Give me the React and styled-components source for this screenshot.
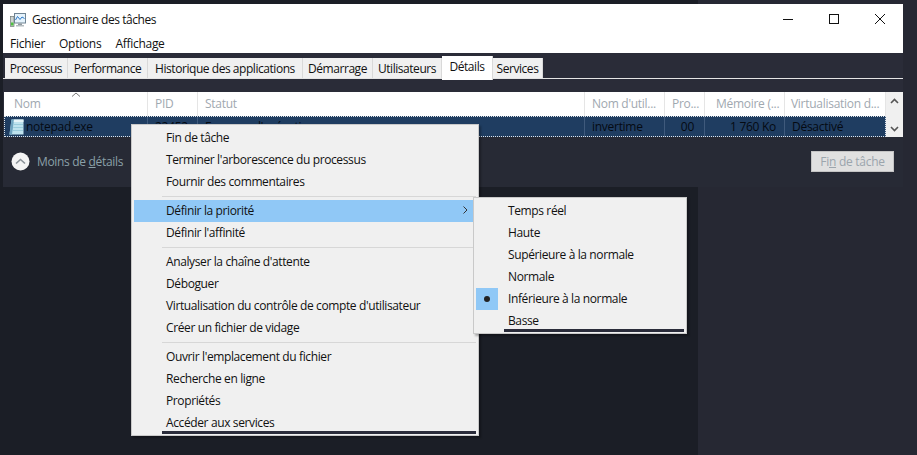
import React from "react";
import styled, { createGlobalStyle } from "styled-components";

const GlobalStyle = createGlobalStyle`
  html, body {
    margin: 0;
    padding: 0;
    height: 100%;
    background: #1b1e26;
    overflow: hidden;
  }
  * {
    box-sizing: border-box;
  }
  body {
    font-family: "Open Sans", "Liberation Sans", sans-serif;
    font-size: 12px;
    letter-spacing: -0.28px;
    color: #111;
  }
`;

const Desktop = styled.div`
  position: relative;
  width: 917px;
  height: 455px;
  display: grid;
  grid-template-columns: 698px 219px;
  overflow: hidden;
`;

const BackLeft = styled.div`
  background: #1b1e26;
`;

const BackRight = styled.div`
  background: #262833;
`;

const Window = styled.div`
  position: absolute;
  left: 3px;
  top: 4px;
  width: 900px;
  height: 183px;
  background: #2a2c38;
  display: flex;
  flex-direction: column;
`;

const TitleBar = styled.div`
  height: 32px;
  background: #fff;
  display: flex;
  align-items: center;
  padding-left: 7px;
  gap: 6px;
`;

const WindowTitle = styled.span`
  flex: 1;
  line-height: 30px;
  letter-spacing: -0.45px;
`;

const Controls = styled.div`
  display: flex;
  height: 32px;
`;

const ControlButton = styled.div`
  width: 46px;
  display: flex;
  align-items: center;
  justify-content: center;
  padding-bottom: 3px;
`;

const MenuBar = styled.div`
  height: 17px;
  background: #fff;
  display: flex;
  gap: 14px;
  padding-left: 7px;
  line-height: 16px;
`;

const TabStrip = styled.div`
  height: 26px;
  display: flex;
  align-items: flex-end;
  padding-left: 2px;
  border-bottom: 1px solid #e4e4e4;
`;

const Tab = styled.div`
  position: relative;
  width: ${(p) => p.$w}px;
  height: ${(p) => (p.$active ? 24 : 20)}px;
  margin-bottom: ${(p) => (p.$active ? -2 : 0)}px;
  padding-top: 3px;
  background: ${(p) => (p.$active ? "#fff" : "#f0f0f0")};
  border-right: 1px solid #d9d9d9;
  text-align: center;
  line-height: 15px;
  letter-spacing: -0.45px;
  z-index: ${(p) => (p.$active ? 1 : 0)};
`;

const TableArea = styled.div`
  margin: 13px 0 0 1px;
  display: flex;
  height: 45px;
`;

const Table = styled.div`
  width: 882px;
  background: #fff;
`;

const Row = styled.div`
  display: grid;
  grid-template-columns: 144px 50px 387px 80px 40px 80px 101px;
  height: ${(p) => p.$h}px;
`;

const HeaderCell = styled.div`
  position: relative;
  padding: 3px 0 0 ${(p) => p.$pad || 10}px;
  color: #9fa8b0;
  border-right: 1px solid #e5e5e5;
  line-height: 18px;
  white-space: nowrap;
`;

const SortCaret = styled.svg`
  position: absolute;
  left: 67px;
  top: 0;
`;

const SelectedRow = styled(Row)`
  background: #1f3d61;
  outline: 1px dotted #dfe5ea;
  outline-offset: -1px;
`;

const Cell = styled.div`
  padding: 0 ${(p) => p.$end || 0}px 0 ${(p) => p.$pad || 0}px;
  color: #050a12;
  border-right: 1px solid #3f5a7c;
  line-height: 20px;
  white-space: nowrap;
  display: flex;
  align-items: center;
  justify-content: ${(p) => (p.$end ? "flex-end" : "flex-start")};
  gap: 2px;
`;

const ScrollBar = styled.div`
  width: 17px;
  background: #f0f0f0;
  display: flex;
  flex-direction: column;
  justify-content: space-between;
  align-items: center;
  padding: 6px 0 5px;
`;

const Footer = styled.div`
  flex: 1;
  background: #272a35;
  display: flex;
  align-items: center;
  justify-content: space-between;
  padding: 0 9px 2px 8px;
`;

const DetailsToggle = styled.div`
  display: flex;
  align-items: center;
  gap: 7px;
  color: #8ba0a8;
  letter-spacing: -0.32px;
`;

const EndTaskButton = styled.div`
  width: 83px;
  height: 21px;
  background: #e0e0e0;
  border: 1px solid #c4c4c4;
  color: #9ba5ad;
  text-align: center;
  line-height: 19px;
`;

const Menu = styled.div`
  position: absolute;
  left: ${(p) => p.$x}px;
  top: ${(p) => p.$y}px;
  width: ${(p) => p.$w}px;
  background: #f0f0f0;
  border: 1px solid #c9c9c9;
  padding: 2px 2px 1px;
  box-shadow: 2px 2px 2px rgba(0, 0, 0, 0.3);
  z-index: ${(p) => p.$z || 5};
`;

const Item = styled.div`
  position: relative;
  height: 22px;
  line-height: 22px;
  padding-left: ${(p) => p.$pad}px;
  white-space: nowrap;
  letter-spacing: -0.38px;
  background: ${(p) => (p.$hot ? "#90c8f6" : "transparent")};
`;

const ItemBar = styled.div`
  position: absolute;
  left: ${(p) => p.$left}px;
  right: 0;
  bottom: 0;
  height: 3px;
  background: #2a2c3a;
`;

const Chevron = styled.svg`
  position: absolute;
  right: 8px;
  top: 6px;
`;

const CheckMark = styled.div`
  position: absolute;
  left: 0;
  top: 0;
  width: 22px;
  height: 22px;
  background: #90c8f6;
  display: flex;
  align-items: center;
  justify-content: center;
`;

const Bullet = styled.div`
  width: 6px;
  height: 6px;
  border-radius: 50%;
  background: #222;
`;

const Separator = styled.div`
  height: 1px;
  margin: 3px 0 3px 28px;
  background: #d7d7d7;
`;

const DragMark = styled.div`
  position: absolute;
  left: 13px;
  top: 136px;
  width: 9px;
  height: 1px;
  border-top: 1px dotted #dfe5ea;
`;

const mainGroups = [
  ["Fin de tâche", "Terminer l'arborescence du processus", "Fournir des commentaires"],
  ["Définir la priorité", "Définir l'affinité"],
  [
    "Analyser la chaîne d'attente",
    "Déboguer",
    "Virtualisation du contrôle de compte d'utilisateur",
    "Créer un fichier de vidage",
  ],
  ["Ouvrir l'emplacement du fichier", "Recherche en ligne", "Propriétés", "Accéder aux services"],
];

const priorities = [
  "Temps réel",
  "Haute",
  "Supérieure à la normale",
  "Normale",
  "Inférieure à la normale",
  "Basse",
];

const tabs = [
  ["Processus", 63],
  ["Performance", 80],
  ["Historique des applications", 155],
  ["Démarrage", 70],
  ["Utilisateurs", 69],
  ["Détails", 51, true],
  ["Services", 50],
];

function AppIcon() {
  return (
    <svg width="16" height="15" viewBox="0 0 16 15">
      <rect x="0.5" y="3.5" width="3.5" height="10" fill="#cfd4d2" stroke="#6f7a78" strokeWidth="0.7" />
      <rect x="1" y="9.5" width="2.5" height="3" fill="#4fc040" />
      <rect x="4.5" y="0.5" width="11" height="9.5" fill="#e6f3fc" stroke="#6f8494" />
      <path d="M5.5 7 L7.5 3.5 L10 6.5 L12 4 L14.5 5.5" fill="none" stroke="#2a78c8" strokeWidth="1" />
      <rect x="8" y="10.5" width="4" height="1.5" fill="#8f999f" />
      <rect x="6" y="12" width="8" height="1.5" fill="#b4bcc0" />
    </svg>
  );
}

function NotepadIcon() {
  return (
    <svg width="15" height="16" viewBox="0 0 15 16">
      <path d="M2.5 0.5 H14.5 V15.5 H0.5 Z" fill="#bfe3ee" />
      <path d="M2.5 0.5 H5 L3 15.5 H0.5 Z" fill="#6fa4c0" />
      <path d="M5 0.5 H14.5 V3 H4.7 Z" fill="#e6f4f8" />
      <path d="M4.5 5.5 H14 M4.2 8.5 H14 M3.9 11.5 H14" stroke="#9accdc" strokeWidth="1" />
    </svg>
  );
}

function App() {
  return (
    <>
      <GlobalStyle />
      <Desktop>
        <BackLeft />
        <BackRight />
        <Window>
          <TitleBar>
            <AppIcon />
            <WindowTitle>Gestionnaire des tâches</WindowTitle>
            <Controls>
              <ControlButton>
                <svg width="10" height="10" viewBox="0 0 10 10">
                  <path d="M0 5.5 H10" stroke="#111" />
                </svg>
              </ControlButton>
              <ControlButton>
                <svg width="10" height="10" viewBox="0 0 10 10">
                  <rect x="0.5" y="0.5" width="9" height="9" fill="none" stroke="#111" />
                </svg>
              </ControlButton>
              <ControlButton>
                <svg width="10" height="10" viewBox="0 0 10 10">
                  <path d="M0 0 L10 10 M10 0 L0 10" stroke="#111" />
                </svg>
              </ControlButton>
            </Controls>
          </TitleBar>
          <MenuBar>
            <span>Fichier</span>
            <span>Options</span>
            <span>Affichage</span>
          </MenuBar>
          <TabStrip>
            {tabs.map(([label, w, active]) => (
              <Tab key={label} $w={w} $active={active}>
                {label}
              </Tab>
            ))}
          </TabStrip>
          <TableArea>
            <Table>
              <Row $h={24}>
                <HeaderCell>
                  Nom
                  <SortCaret width="10" height="5" viewBox="0 0 10 5">
                    <path d="M1 4.5 L5 1 L9 4.5" fill="none" stroke="#777" />
                  </SortCaret>
                </HeaderCell>
                <HeaderCell $pad={7}>PID</HeaderCell>
                <HeaderCell $pad={7}>Statut</HeaderCell>
                <HeaderCell $pad={7}>Nom d'util...</HeaderCell>
                <HeaderCell $pad={7}>Pro...</HeaderCell>
                <HeaderCell $pad={11}>Mémoire (...</HeaderCell>
                <HeaderCell $pad={6}>Virtualisation d...</HeaderCell>
              </Row>
              <SelectedRow $h={21}>
                <Cell $pad={5}>
                  <NotepadIcon />
                  notepad.exe
                </Cell>
                <Cell $pad={7}>22452</Cell>
                <Cell $pad={7}>En cours d'exécution</Cell>
                <Cell $pad={7}>invertime</Cell>
                <Cell $end={10}>00</Cell>
                <Cell $end={8}>1 760 Ko</Cell>
                <Cell $pad={7}>Désactivé</Cell>
              </SelectedRow>
            </Table>
            <ScrollBar>
              <svg width="9" height="6" viewBox="0 0 9 6">
                <path d="M1 5 L4.5 1.5 L8 5" fill="none" stroke="#555" strokeWidth="1.6" />
              </svg>
              <svg width="9" height="6" viewBox="0 0 9 6">
                <path d="M1 1 L4.5 4.5 L8 1" fill="none" stroke="#555" strokeWidth="1.6" />
              </svg>
            </ScrollBar>
          </TableArea>
          <Footer>
            <DetailsToggle>
              <svg width="19" height="19" viewBox="0 0 19 19">
                <circle cx="9.5" cy="9.5" r="9" fill="#f4f4f4" />
                <path d="M5 11.5 L9.5 7.5 L14 11.5" fill="none" stroke="#8a9298" strokeWidth="1.6" />
              </svg>
              <span>
                Moins de <u>d</u>étails
              </span>
            </DetailsToggle>
            <EndTaskButton>
              Fi<u>n</u> de tâche
            </EndTaskButton>
          </Footer>
        </Window>
        <DragMark />
        <Menu $x={131} $y={124} $w={348}>
          {mainGroups.map((group, g) => (
            <React.Fragment key={g}>
              {g > 0 && <Separator />}
              {group.map((label) => (
                <Item key={label} $pad={32} $hot={label === "Définir la priorité"}>
                  {label}
                  {label === "Définir la priorité" && (
                    <Chevron width="5" height="8" viewBox="0 0 5 8">
                      <path d="M0.5 0.5 L4 4 L0.5 7.5" fill="none" stroke="#333" />
                    </Chevron>
                  )}
                  {label === "Accéder aux services" && <ItemBar $left={28} />}
                </Item>
              ))}
            </React.Fragment>
          ))}
        </Menu>
        <Menu $x={473} $y={197} $w={214} $z={6}>
          {priorities.map((label) => (
            <Item key={label} $pad={32}>
              {label === "Inférieure à la normale" && (
                <CheckMark>
                  <Bullet />
                </CheckMark>
              )}
              {label}
              {label === "Basse" && <ItemBar $left={28} />}
            </Item>
          ))}
        </Menu>
      </Desktop>
    </>
  );
}

export default App;
